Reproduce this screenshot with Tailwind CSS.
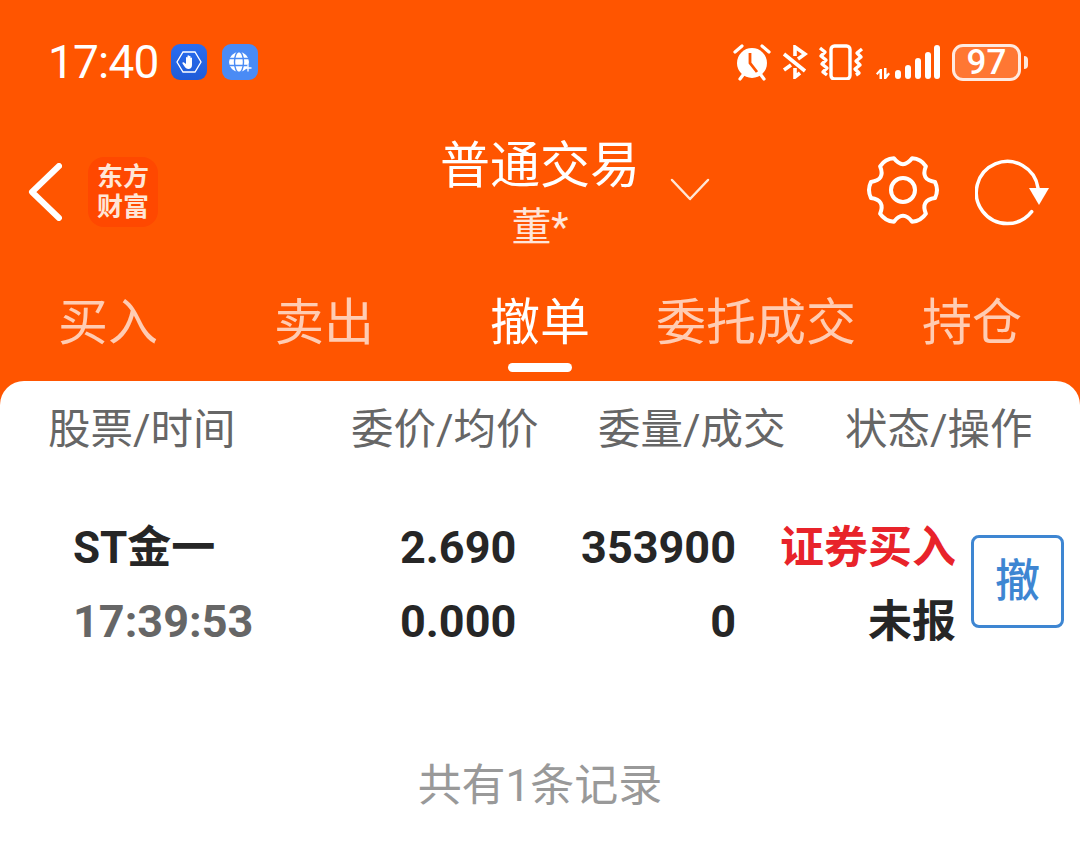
<!DOCTYPE html>
<html lang="zh-CN">
<head>
  <meta charset="UTF-8">
  <title>普通交易</title>
  <meta name="viewport" content="width=device-width, initial-scale=1.0">
  <script src="https://cdn.jsdelivr.net/npm/@tailwindcss/browser@4"></script>
</head>
<body class="w-[1080px] h-[846px] overflow-hidden bg-[#ff5500] font-['Roboto','Noto_Sans_CJK_SC',sans-serif]">

  <!-- status bar -->
  <div class="h-[124px] flex items-center pl-[48px] text-white">
    <span class="w-[111px] text-[46px] leading-none tracking-[-0.8px]">17:40</span>
    <div class="ml-[12px] w-[36px] h-[36px] rounded-[9px] bg-gradient-to-b from-[#2a6df0] to-[#1f5cd8] flex items-center justify-center">
      <svg viewBox="0 0 26 26" class="w-[26px] h-[26px]"><path d="M7 3h12l6 10-6 10H7L1 13z" fill="none" stroke="#fff" stroke-width="1.300"/><path d="M8 13.500l2 1.500V8.500a.8.8 0 0 1 1.500 0V12V6.800a.8.800 0 0 1 1.500 0V12V7.300a.8.8 0 0 1 1.500 0V12.500V9a.8.800 0 0 1 1.500 0v7c0 2.500-1.500 4-3.500 4s-3-1-4-2.500l-2-3c-.5-1 .7-1.900 1.500-1z" fill="#fff"/></svg>
    </div>
    <div class="ml-[15px] w-[36px] h-[36px] rounded-[9px] bg-[#4a8bf5] flex items-center justify-center">
      <svg viewBox="0 0 26 26" class="w-[26px] h-[26px]" fill="none"><circle cx="12" cy="13" r="10" fill="#fff"/><path d="M1 9.500h22M1 16.500h22" stroke="#4a8bf5" stroke-width="1.600"/><ellipse cx="12" cy="13" rx="4.500" ry="10.500" stroke="#4a8bf5" stroke-width="1.400"/><path d="M21 15.500v7M17.500 19h7" stroke="#fff" stroke-width="1.300"/></svg>
    </div>

    <!-- alarm -->
    <svg viewBox="0 0 38 38" class="ml-[475px] w-[38px] h-[38px]"><circle cx="19" cy="20" r="15" fill="#fff"/><path d="M17 10v10l7 9" fill="none" stroke="#ff5500" stroke-width="2.800"/><path d="M2 9l7-6M36 9l-7-6M7 36l3-4M31 36l-3-4" stroke="#fff" stroke-width="3.200" stroke-linecap="round"/></svg>
    <!-- bluetooth with slash -->
    <svg viewBox="0 0 26 34" class="ml-[11px] w-[26px] h-[34px]" fill="none" stroke="#fff" stroke-width="3.600"><path d="M2 9l21 17M2 25l7-5M16 14l7-5-10-7v9M13 23v9l5-4"/></svg>
    <!-- vibrate -->
    <svg viewBox="0 0 46 36" class="ml-[10px] w-[46px] h-[36px]" fill="none" stroke="#fff" stroke-width="3.400" stroke-linejoin="round"><rect x="13" y="2" width="19" height="33" rx="3.500"/><path d="M2 4l5 4-4 4 5 4-4 4 5 4-4 4 4 3M44 5l-5 4 4 4-5 4 4 4-5 4 4 4-3 2"/></svg>
    <!-- signal -->
    <svg viewBox="0 0 64 36" class="ml-[12px] w-[64px] h-[36px]" fill="#fff"><path d="M0 29.500L4 25h2v10H3.500v-6.500L1.500 31zM8 24h2.500v6.500l2-2 1.500 1.500-4 5H8z"/><rect x="19" y="26" width="6" height="9" rx="3"/><rect x="29" y="21" width="6" height="14" rx="3"/><rect x="39" y="14" width="6" height="21" rx="3"/><rect x="49" y="8" width="6" height="27" rx="3"/><rect x="58" y="1" width="6" height="34" rx="3"/></svg>
    <!-- battery -->
    <div class="ml-[12px] w-[69px] h-[37px] rounded-[11px] border-[3px] border-white/85 bg-white/20 flex items-center justify-center text-[35px] leading-none font-medium">97</div>
    <div class="ml-[3px] w-[4px] h-[13px] rounded-r-full bg-white/85"></div>
  </div>

  <!-- title bar -->
  <div class="relative h-[130px] text-white">
    <div class="absolute left-[28px] top-[33px] flex items-center">
      <svg viewBox="0 0 34 58" class="w-[34px] h-[58px]" fill="none" stroke="#fff" stroke-width="6" stroke-linecap="round" stroke-linejoin="round"><path d="M31 3L4 29l27 26"/></svg>
      <div class="ml-[26px] w-[70px] h-[70px] rounded-[16px] bg-[#ff4800] text-[#ffe6d6] text-[26px] leading-[30px] font-bold flex flex-col items-center justify-center">
        <div>东方</div>
        <div>财富</div>
      </div>
    </div>
    <div class="flex flex-col items-center">
      <div class="mt-[10px] text-[50px] leading-[64px]">普通交易</div>
      <div class="mt-[5px] text-[40px] leading-[50px] text-white/85">董*</div>
    </div>
    <svg viewBox="0 0 40 24" class="absolute left-[670px] top-[54px] w-[40px] h-[24px]" fill="none" stroke="#ffe6d6" stroke-width="2.500" stroke-linecap="round" stroke-linejoin="round"><path d="M2 2l18 19L38 2"/></svg>
    <svg viewBox="0 0 70 70" class="absolute left-[868px] top-[31px] w-[70px] h-[70px] overflow-visible" fill="none" stroke="#fff" stroke-width="4" stroke-linejoin="round"><path d="M67 27Q71 35 67 43Q52.3 45 57.900 58.700Q53 66.200 44.100 66.700Q35 55 25.900 66.700Q17 66.200 12.100 58.700Q17.700 45 3 43Q-1 35 3 27Q17.700 25 12.100 11.300Q17 3.800 25.900 3.300Q35 15 44.100 3.300Q53 3.800 57.900 11.300Q52.300 25 67 27z"/><circle cx="35" cy="35" r="12"/></svg>
    <svg viewBox="0 0 74 70" class="absolute left-[975px] top-[34px] w-[74px] h-[70px]" fill="none" stroke="#fff" stroke-width="3.500" stroke-linecap="round"><path d="M56.700 53.700A31 31 0 1 1 63 30"/><path d="M54 30h20L64 47z" fill="#fff" stroke="none"/></svg>
  </div>

  <!-- tabs -->
  <div class="grid grid-cols-5 h-[127px] text-[50px] leading-[64px] text-white/70 text-center">
    <div class="pt-[37px]">买入</div>
    <div class="pt-[37px]">卖出</div>
    <div class="relative pt-[37px] text-white">撤单
      <div class="absolute left-[76px] top-[109px] w-[64px] h-[9px] rounded-full bg-white"></div>
    </div>
    <div class="pt-[37px]">委托成交</div>
    <div class="pt-[37px]">持仓</div>
  </div>

  <!-- list -->
  <div class="h-[465px] bg-white rounded-t-[24px]">
    <div class="grid grid-cols-[48px_303px_247px_247px_1fr] pt-[19px] text-[42.5px] leading-[60px] text-[#666666]">
      <div></div>
      <div>股票/时间</div>
      <div>委价/均价</div>
      <div>委量/成交</div>
      <div>状态/操作</div>
    </div>
    <div class="flex items-center mt-[44px] text-[#262626] text-[44px] leading-[74px] font-bold">
      <div class="w-[73px]"></div>
      <div class="w-[327px] pt-[7px]">
        <div>ST金一</div>
        <div class="text-[45px] text-[#666666]">17:39:53</div>
      </div>
      <div class="w-[115px] pt-[7px] text-[45px]">
        <div>2.690</div>
        <div>0.000</div>
      </div>
      <div class="w-[221px] pt-[7px] text-right text-[45px]">
        <div>353900</div>
        <div>0</div>
      </div>
      <div class="w-[220px] pt-[7px] text-right">
        <div class="text-[#e8232a]">证券买入</div>
        <div>未报</div>
      </div>
      <div class="ml-[15px] w-[93px] h-[93px] rounded-[8px] border-[3px] border-[#3e86d2] text-[#3e86d2] text-[45px] font-medium flex items-center justify-center">撤</div>
    </div>
    <div class="mt-[99px] text-center text-[44px] leading-[56px] text-[#999999]">共有1条记录</div>
  </div>

</body>
</html>
